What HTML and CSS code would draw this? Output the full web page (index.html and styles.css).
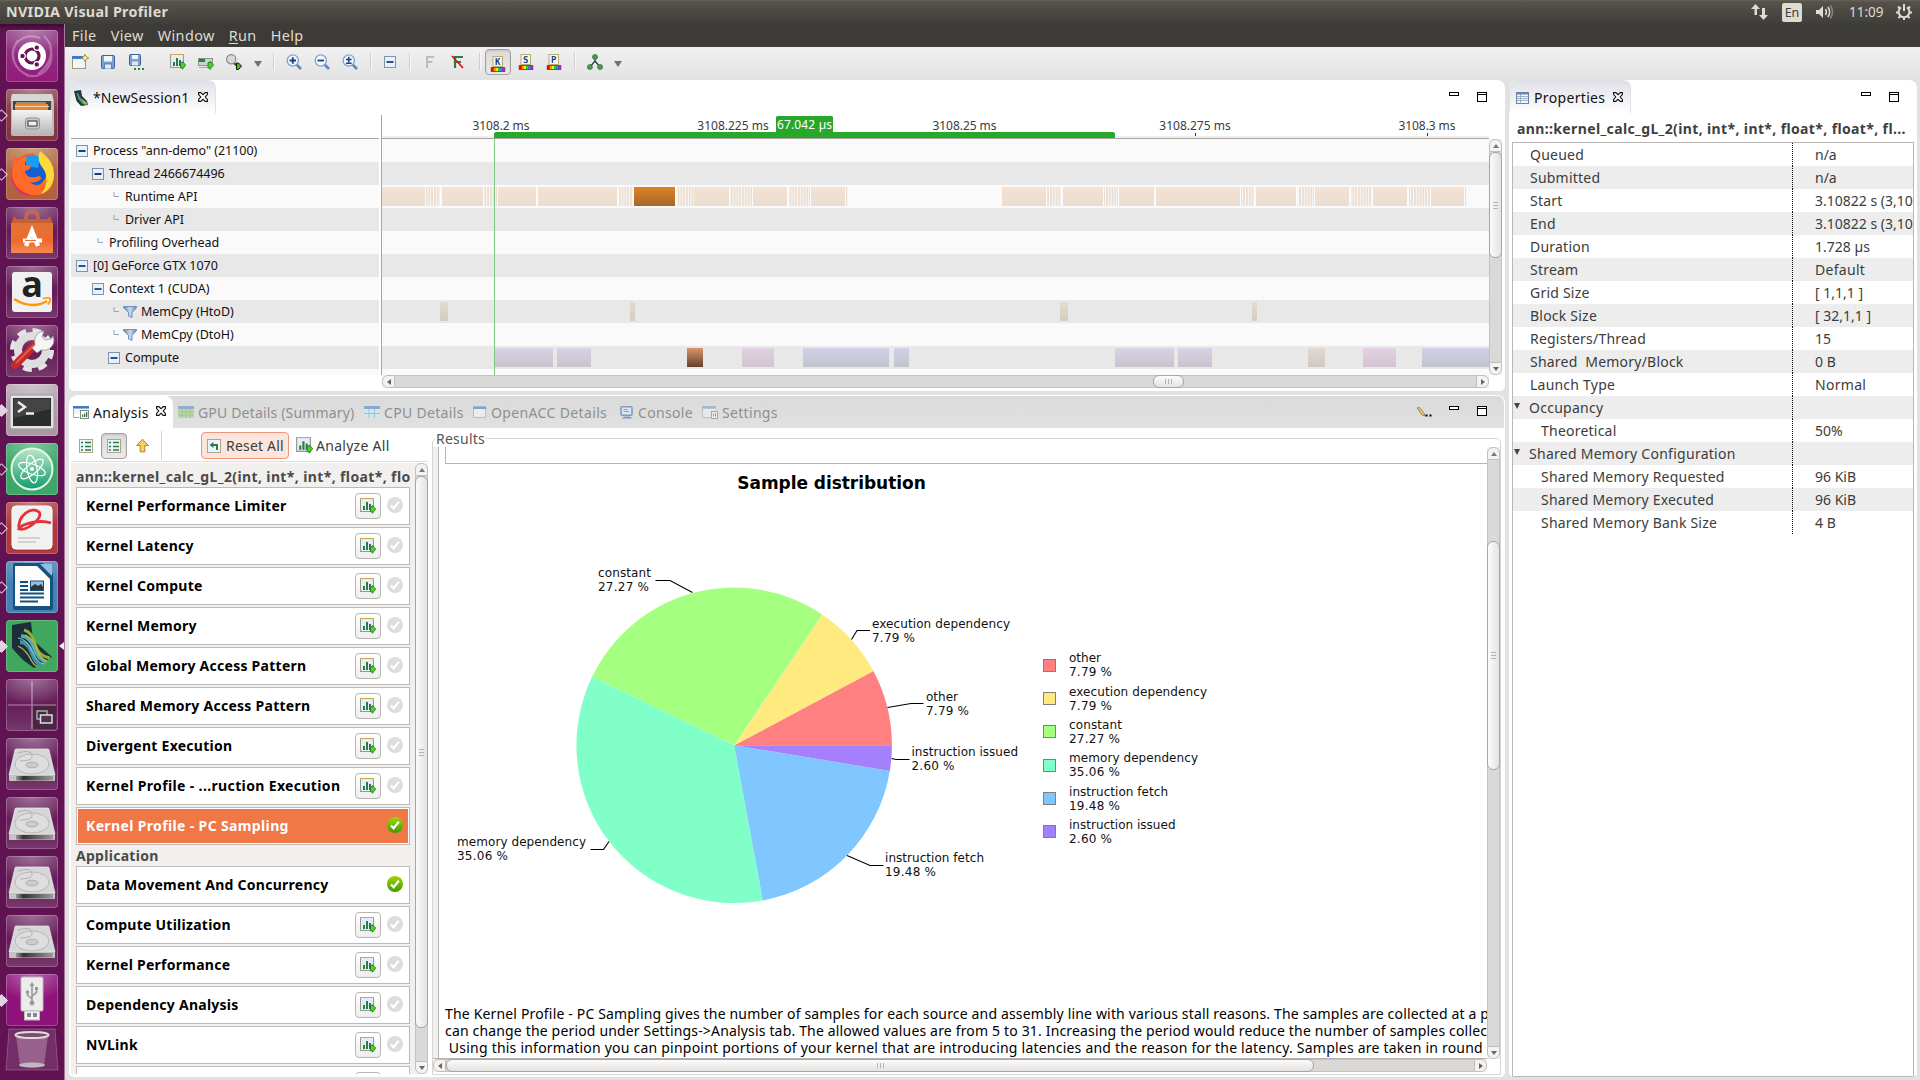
FILE: index.html
```html
<!DOCTYPE html>
<html lang="en">
<head>
<meta charset="utf-8">
<title>NVIDIA Visual Profiler</title>
<link rel="stylesheet" href="styles.css">
</head>
<body>
<svg class="defs" width="0" height="0">
  <defs>
    <linearGradient id="g-api" x1="0" y1="0" x2="0" y2="1"><stop offset="0" stop-color="#f5e2d2"/><stop offset="1" stop-color="#eaddd1"/></linearGradient>
    <linearGradient id="g-sel" x1="0" y1="0" x2="0" y2="1"><stop offset="0" stop-color="#e08224"/><stop offset="1" stop-color="#a5672e"/></linearGradient>
    <linearGradient id="g-cpy" x1="0" y1="0" x2="0" y2="1"><stop offset="0" stop-color="#e0dccb"/><stop offset="1" stop-color="#d5cdbf"/></linearGradient>
    <linearGradient id="g-vio" x1="0" y1="0" x2="0" y2="1"><stop offset="0" stop-color="#dbd1e6"/><stop offset="1" stop-color="#c8c3cd"/></linearGradient>
    <linearGradient id="g-blu" x1="0" y1="0" x2="0" y2="1"><stop offset="0" stop-color="#d0d0e8"/><stop offset="1" stop-color="#c3c3cc"/></linearGradient>
    <linearGradient id="g-pnk" x1="0" y1="0" x2="0" y2="1"><stop offset="0" stop-color="#e4d0e4"/><stop offset="1" stop-color="#d0c5ce"/></linearGradient>
    <linearGradient id="g-brn" x1="0" y1="0" x2="0" y2="1"><stop offset="0" stop-color="#d9976b"/><stop offset="1" stop-color="#63402b"/></linearGradient>
    <linearGradient id="g-tan" x1="0" y1="0" x2="0" y2="1"><stop offset="0" stop-color="#e4d8d0"/><stop offset="1" stop-color="#cfc8c3"/></linearGradient>
    <linearGradient id="g-metal" x1="0" y1="0" x2="0" y2="1"><stop offset="0" stop-color="#f4f4f4"/><stop offset="1" stop-color="#b4b4b4"/></linearGradient>
    <linearGradient id="g-steel" x1="0" y1="0" x2="1" y2="0"><stop offset="0" stop-color="#999"/><stop offset=".2" stop-color="#333"/><stop offset="1" stop-color="#999"/></linearGradient>
    <linearGradient id="g-fox" x1="1" y1="0" x2="0" y2="1"><stop offset="0" stop-color="#ffe226"/><stop offset=".35" stop-color="#ff980e"/><stop offset=".7" stop-color="#ff3647"/><stop offset="1" stop-color="#c4168c"/></linearGradient>
    <linearGradient id="g-bag" x1="0" y1="0" x2="0" y2="1"><stop offset="0" stop-color="#e0733a"/><stop offset=".6" stop-color="#ef6a2c"/><stop offset="1" stop-color="#f58a52"/></linearGradient>
    <linearGradient id="g-atom" x1="0" y1="0" x2="0" y2="1"><stop offset="0" stop-color="#b9e8c8"/><stop offset="1" stop-color="#0e9c6e"/></linearGradient>
    <linearGradient id="g-funnel" x1="0" y1="0" x2="1" y2="0"><stop offset="0" stop-color="#5f83b8"/><stop offset=".5" stop-color="#c9dbf0"/><stop offset="1" stop-color="#5f83b8"/></linearGradient>
    <linearGradient id="g-ok" x1="0" y1="0" x2="0" y2="1"><stop offset="0" stop-color="#a4d500"/><stop offset="1" stop-color="#3f9a06"/></linearGradient>
    <pattern id="p-api" width="2.8" height="19" patternUnits="userSpaceOnUse"><rect width="1.8" height="19" fill="#ebddd0"/></pattern>
    <symbol id="i-run" viewBox="0 0 16 16">
      <rect x=".5" y=".5" width="13" height="13" fill="#e4ecf8" stroke="#c4ae6a"/><path d="M.5 1v12.500h13V1" fill="none" stroke="#9a9a90"/><path d="M.5.500h13" stroke="#c9aa50"/>
      <path d="M3 8h2v4H3zM6 4h2v8H6zM9 6h2v6H9z" fill="#2e7a44"/>
      <path d="M10.500 8.500h2v-1l3.200 3.500-3.200 4.200v-1.200h-2z" fill="#55cc28" stroke="#167a16" stroke-width=".8"/>
    </symbol>
    <symbol id="i-check" viewBox="0 0 16 16"><circle cx="8" cy="8" r="8" fill="currentColor"/><path d="M4 8.500l2.600 2.800 5.200-6.500" fill="none" stroke="#fff" stroke-width="2.200"/></symbol>
    <symbol id="i-ok" viewBox="0 0 16 16"><circle cx="8" cy="8" r="8" fill="url(#g-ok)"/><path d="M4 8.500l2.600 2.800 5.200-6.500" fill="none" stroke="#fff" stroke-width="2.200"/></symbol>
    <symbol id="i-close" viewBox="0 0 10 10"><path d="M.6.6h2.200L5 2.700 7.200.6h2.200v1.900L7.200 5l2.200 2.500v1.900H7.200L5 7.300 2.800 9.400H.6V7.500L2.800 5 .6 2.500z" fill="#fff" stroke="#111" stroke-width="1.100"/></symbol>
    <symbol id="i-min" viewBox="0 0 10 10"><rect x=".5" y=".5" width="9" height="3" fill="#fff" stroke="#000"/></symbol>
    <symbol id="i-max" viewBox="0 0 10 10"><rect x=".5" y=".5" width="9" height="9" fill="#fff" stroke="#000"/><path d="M0 2.500h10" stroke="#000"/></symbol>
    <symbol id="i-fold" viewBox="0 0 12 12"><rect x=".5" y=".5" width="11" height="11" fill="#e6f2fb" stroke="#7f93ab"/><path d="M2.500 6h7" stroke="#1c3f7c" stroke-width="1.800"/></symbol>
    <symbol id="i-leaf" viewBox="0 0 6 6"><path d="M1 0v4.500h5" fill="none" stroke="#93a7bd"/></symbol>
    <symbol id="i-funnel" viewBox="0 0 14 12"><path d="M.5.500h13v1.200L9 6.500V11.500L5.500 10V6.500L.5 1.700z" fill="url(#g-funnel)" stroke="#5f7fae" stroke-width=".8"/></symbol>
    <symbol id="i-window" viewBox="0 0 16 14"><rect x=".5" y="1.500" width="14" height="11" fill="#eef6fc" stroke="#a0a58a"/><rect x="0" y="0" width="15" height="3" fill="#4a86c8"/></symbol>
    <symbol id="i-analysis" viewBox="0 0 16 13"><path d="M.5 3v8.500h6" fill="none" stroke="#a8a578"/><rect x="1" y="3" width="14" height="5" fill="#eef6fc"/><rect x="0" y="0" width="16" height="2.600" fill="#3f7cc0"/><rect x="7.500" y="4.500" width="8" height="8" fill="#fff" stroke="#888"/><path d="M9 8.500h1.300V11H9zm2-1h1.300V11H11zm2-1.500h1.300v5H13z" fill="#2e7a44"/></symbol>
    <symbol id="i-settings" viewBox="0 0 16 13"><path d="M.5 3v8.500h8" fill="none" stroke="#b5b08a"/><rect x="1" y="3" width="12" height="8" fill="#eef0f0"/><rect x="0" y="0" width="14" height="2.600" fill="#7fa3c8"/><rect x="9.500" y="5.500" width="6" height="7" fill="#f4f4ee" stroke="#8d8d80"/><path d="M11.500 7.500v3M13.500 7.500v3" stroke="#777"/></symbol>
    <symbol id="i-grid-g" viewBox="0 0 16 12"><rect width="16" height="12" fill="#a8d890"/><rect width="16" height="3" fill="#6a98c0"/><path d="M0 6h16M0 9h16M4 3v9M8 3v9M12 3v9" stroke="#7cb860"/></symbol>
    <symbol id="i-grid-b" viewBox="0 0 16 12"><rect width="16" height="12" fill="#cfeaf8"/><rect width="16" height="3" fill="#5a90c4"/><path d="M0 7.500h16M5 3v9M10.500 3v9" stroke="#7fb2d0"/></symbol>
    <symbol id="i-console" viewBox="0 0 14 13"><rect x="1" y=".8" width="11" height="8.500" rx="1" fill="#dfeaf6" stroke="#5078b0" stroke-width="1.600"/><path d="M3.500 3.500h4M3.500 5.500h5.500" stroke="#5f80a8"/><path d="M4 10.500h6l2.500 2H1.500z" fill="#5078b0"/></symbol>
    <symbol id="i-list" viewBox="0 0 14 14"><rect x=".5" y=".5" width="13" height="13" fill="#eef4fb" stroke="#aaa68a"/><path d="M6 3.500h6M6 7.500h6M6 11h6" stroke="#2e7a44" stroke-width="1.300"/><path d="M2 3.500h2M2 7.500h2M2 11h2" stroke="#2e7a44" stroke-width="1.600"/></symbol>
    <symbol id="i-glass" viewBox="0 0 16 16"><path d="M10 10l5 5" stroke="#5f86ba" stroke-width="2.600"/><circle cx="6.800" cy="6.500" r="5.600" fill="#f2f8fd" stroke="#7fa3cf" stroke-width="1.300"/></symbol>
    <symbol id="i-rainbow" viewBox="0 0 15 16"><rect x="2.500" y=".5" width="9.500" height="10" fill="#f4f8fd" stroke="#bda96a"/><rect x="0" y="11" width="15" height="5" fill="#555a78"/><path d="M1 12h2.200v3H1z" fill="#e00"/><path d="M3.200 12h2.200v3H3.200z" fill="#f90"/><path d="M5.400 12h2.200v3H5.400z" fill="#fe0"/><path d="M7.600 12h2.200v3H7.600z" fill="#2c4"/><path d="M9.800 12H12v3H9.800z" fill="#19d"/><path d="M12 12h2v3h-2z" fill="#c1c"/></symbol>
    <symbol id="i-session" viewBox="0 0 15 16"><path d="M0 1L7 0l1 6 5 5 1 4-7 1L2.500 11z" fill="#203a38"/><path d="M4 2l2 5 6 5 1 3-5-1L4 9z" fill="#3f7d60"/><path d="M7.500 9l5 3 1 3-4-1z" fill="#9ab54a"/><path d="M3 3l2 5 5 5" stroke="#86b5a8" fill="none" stroke-width=".8"/></symbol>
    <symbol id="i-disk" viewBox="0 0 52 52">
      <path d="M9 12q0-1 1-1h32q1 0 1 1l6 25H3z" fill="#d6d6d6" stroke="#eee" stroke-width=".7"/>
      <ellipse cx="26" cy="26" rx="17" ry="10" fill="#dedede" stroke="#aaa" stroke-width=".7"/>
      <ellipse cx="26" cy="27" rx="6" ry="2.800" fill="#ccc" stroke="#999" stroke-width=".7"/><path d="M12 15q12-4 14 2t-12 6" fill="none" stroke="#b2b2b2"/>
      <path d="M3 37h46v5q0 1-1 1H4q-1 0-1-1z" fill="#c4c4c4"/><rect x="10" y="38" width="37" height="4.500" fill="url(#g-steel)"/>
    </symbol>
  </defs>
</svg>

<header class="topbar">
  <h1 class="app-title">NVIDIA Visual Profiler</h1>
  <div class="tray">
    <svg width="17" height="16" viewBox="0 0 17 16" fill="#dfdbd2"><path d="M4.500 0L9 5H6v6H3.500V5H0zM12.500 16L8 11h3V4h3v7h3z"/></svg>
    <span class="lang">En</span>
    <svg width="20" height="16" viewBox="0 0 20 16" fill="none" stroke="#dfdbd2"><path d="M1 6h3l4-4v12L4 10H1z" fill="#dfdbd2" stroke="none"/><path d="M10.500 5q1.800 3 0 6" stroke-width="1.500"/><path d="M13 3q3.200 5 0 10" stroke-width="1.500"/><path d="M15.500 1.500q4 6.500 0 13" stroke-width="1.500" stroke="#8a877e"/></svg>
    <span class="clock">11:09</span>
    <svg width="16" height="16" viewBox="0 0 16 16" fill="none" stroke="#dfdbd2"><path d="M5 3.400a5.400 5.400 0 1 0 6 0" stroke-width="2"/><path d="M8 0v7" stroke-width="2"/><path d="M2 2.500l2 2M14 2.500l-2 2M0 8.500h2.500M13.500 8.500H16M2.500 14l1.700-1.700M13.500 14l-1.700-1.700M8 14v2" stroke-width="2"/></svg>
  </div>
</header>

<div class="desktop">
<nav class="launcher">
  <div class="tile t-dash"><svg viewBox="0 0 52 52"><g fill="none" stroke="#fff" stroke-opacity=".3"><path d="M8 32C2 14 18 2 34 8M20 45C36 50 50 36 44 16M38 6C50 16 46 34 32 44M12 10C2 24 8 40 22 45" stroke-width="2"/></g><circle cx="26" cy="26" r="14" fill="#fff"/><circle cx="26" cy="26" r="7" fill="none" stroke="#6b1450" stroke-width="3.200"/><g fill="#6b1450" stroke="#fff" stroke-width="1.200"><circle cx="16.500" cy="26" r="2.800"/><circle cx="30.800" cy="17.600" r="2.800"/><circle cx="30.800" cy="34.400" r="2.800"/></g></svg></div>
  <div class="tile t-files open"><svg viewBox="0 0 52 52"><path d="M6 5h40l2 8v32q0 2-2 2H7q-2 0-2-2V13z" fill="#bbb"/><path d="M6 5h40l1.500 7h-43z" fill="#d6d6d6"/><rect x="7" y="12" width="38" height="11" fill="#4a4340"/><path d="M9 15h33v7H9z" fill="#e8853c"/><path d="M10 14h30M9 17.500h34" stroke="#f5d9a8" stroke-width="1.200"/><path d="M6 21h40v25H6z" fill="url(#g-metal)"/><rect x="19.500" y="29" width="14" height="11" rx="2.500" fill="#c9c9c9" stroke="#8f8f8f"/><rect x="22" y="32" width="9" height="5" fill="#eee" stroke="#333"/></svg></div>
  <div class="tile t-firefox open"><svg viewBox="0 0 52 52"><circle cx="26" cy="27" r="21" fill="url(#g-fox)"/><path d="M10 13l-3 9 1-14 4 3q8-7 18-5l-6 2z" fill="#ff5a2c"/><ellipse cx="28" cy="23" rx="13" ry="15" fill="#1560d0"/><path d="M20 9q10-5 14 1l-2 10-12-2z" fill="#1a9cf0"/><path d="M8 10l4 3q6-3 9-1-3 3-2 5l6 1q-1 4-6 5 0 4 5 6 5 1 9-1 3 1 2 3-5 5-12 3 6 5 13 2 5-3 5-9 9 6 3 14-7 7-18 6Q8 43 6 27z" fill="#ff6a28"/><path d="M34 3c9 7 14 13 14 24 0 9-5 16-13 19 6-7 8-19 1-27-4-5-4-11-2-16z" fill="#ffd83a"/></svg></div>
  <div class="tile t-plum"><svg viewBox="0 0 52 52"><path d="M20 17V9q0-4 6-4t6 4v8" fill="none" stroke="#c9674a" stroke-width="3.500"/><path d="M8 9l-3 8h42l-3-8-3 3H11z" fill="#c95f32"/><path d="M5 16h42v30H5z" fill="url(#g-bag)"/><path d="M20 39l6-15 6 15" fill="none" stroke="#fff" stroke-width="4.500"/><path d="M17 33.500h19" stroke="#fff" stroke-width="4"/><path d="M19 33.500h11" stroke="#ee7038" stroke-width="1.200"/></svg></div>
  <div class="tile t-plum"><svg viewBox="0 0 52 52"><rect x="6" y="6" width="40" height="40" rx="3" fill="#f1f1f1"/><text x="26" y="31" class="amz" text-anchor="middle">a</text><path d="M8 33q18 11 33 2" fill="none" stroke="#f90" stroke-width="2.600"/><path d="M37 32.500q6-1.500 7 0t-2 6" fill="none" stroke="#f90" stroke-width="1.800"/></svg></div>
  <div class="tile t-plum"><svg viewBox="0 0 52 52"><circle cx="26" cy="25" r="19" fill="none" stroke="#e4e4e4" stroke-width="6" stroke-dasharray="8.500 6.420"/><circle cx="26" cy="25" r="14" fill="none" stroke="#dedede" stroke-width="8"/><path d="M9 40L30 19" stroke="#c22c28" stroke-width="8" stroke-linecap="round"/><path d="M10 38L28 20" stroke="#e05a50" stroke-width="2"/><path d="M29 20q-2-9 5-13l4-1-2 6 3 3 6-1 2-3q3 8-4 13-4 2-8 1l-4 3-5-5z" fill="#f5f5f5" stroke="#999" stroke-width=".8"/></svg></div>
  <div class="tile t-term running"><svg viewBox="0 0 52 52"><rect x="4" y="11" width="44" height="34" rx="2" fill="#e2e2e2" stroke="#999"/><rect x="7" y="14" width="38" height="28" fill="#2c2c2c"/><path d="M8 15h36v10L8 34z" fill="#444"/><path d="M12 18l7 5-7 5M20 29.500h8" fill="none" stroke="#eee" stroke-width="2.400"/></svg></div>
  <div class="tile t-atom open"><svg viewBox="0 0 52 52"><circle cx="26" cy="26" r="20.500" fill="url(#g-atom)" stroke="#e4f5ea" stroke-width="2"/><g fill="none" stroke="#fff" stroke-width="1.200"><ellipse cx="26" cy="26" rx="14" ry="5" transform="rotate(20 26 26)"/><ellipse cx="26" cy="26" rx="14" ry="5" transform="rotate(80 26 26)"/><ellipse cx="26" cy="26" rx="14" ry="5" transform="rotate(140 26 26)"/></g><circle cx="26" cy="26" r="2" fill="#fff"/></svg></div>
  <div class="tile t-pdf open"><svg viewBox="0 0 52 52"><rect x="6" y="4" width="40" height="43" rx="4" fill="#f1f1f1" stroke="#fff"/><path d="M13 28C11 13 26 4 33 10c5 6-12 19-20 17 2-5 20-10 32-6" fill="none" stroke="#e0343a" stroke-width="2.800"/><path d="M12 36h22M12 40h18" stroke="#c9c9c9" stroke-width="1.400"/></svg></div>
  <div class="tile t-writer open"><svg viewBox="0 0 52 52"><path d="M9 2h28l10 11v34q0 2-2 2H9q-2 0-2-2V4q0-2 2-2z" fill="#16527f"/><path d="M9 5h22l13 13v27H9z" fill="#fdfdfd"/><path d="M34 3h12v12z" fill="#8fc0e4"/><path d="M14 21h8M14 25h8M14 29h8M14 32.500h24M14 36.500h24M14 40.500h18" stroke="#16527f" stroke-width="2"/><rect x="24.500" y="20" width="13" height="9.500" fill="#8ec0ea" stroke="#16527f"/><path d="M25 29v-3l4-3 3 2 3-2 2 3v3z" fill="#333"/></svg></div>
  <div class="tile t-nvvp running focused"><svg viewBox="0 0 52 52"><path d="M6 5l19-3 2 18 19 17-18 11-11-8L6 28z" fill="#1c2f38"/><g fill="none"><path d="M14 22q8 0 12 11t9 12" stroke="#3d93a8" stroke-width="4"/><path d="M15 16q9 0 13 12t13 14" stroke="#55b0b4" stroke-width="3.500"/><path d="M18 10q8 2 11 14t15 14" stroke="#8fae3a" stroke-width="3"/><path d="M12 26q8 4 12 12t7 8M19 15q9 4 12 14t10 12" stroke="#c9b640" stroke-width="1.300"/><path d="M12 18q9 1 14 13t12 13" stroke="#9ad0d0" stroke-width="1"/></g></svg></div>
  <div class="tile t-plum"><svg viewBox="0 0 52 52"><rect x="27" y="27" width="23" height="23" fill="#4a2542"/><path d="M26 2v48M2 26h48" stroke="#fff" stroke-opacity=".5" stroke-width="1.200"/><rect x="31" y="32" width="10" height="8" fill="none" stroke="#aaa" stroke-width="1.500"/><rect x="34.500" y="36" width="11.500" height="8" fill="#55304e" stroke="#ddd" stroke-width="1.500"/></svg></div>
  <div class="tile t-plum"><svg viewBox="0 0 52 52"><use href="#i-disk"/></svg></div>
  <div class="tile t-plum"><svg viewBox="0 0 52 52"><use href="#i-disk"/></svg></div>
  <div class="tile t-plum"><svg viewBox="0 0 52 52"><use href="#i-disk"/></svg></div>
  <div class="tile t-plum"><svg viewBox="0 0 52 52"><use href="#i-disk"/></svg></div>
  <div class="tile t-usb running"><svg viewBox="0 0 52 52"><rect x="15" y="3" width="22" height="34" rx="1.500" fill="#ececec" stroke="#bbb"/><rect x="18.500" y="37" width="15" height="9" fill="#f3f3f3" stroke="#bbb"/><path d="M21 39h4v4h-4zM27 39h4v4h-4z" fill="#888"/><path d="M26 11v18M26 25l-4.500-4v-3M26 22l4.500-3.500V15" stroke="#999" stroke-width="1.600" fill="none"/><circle cx="26" cy="29" r="2.400" fill="#999"/><circle cx="21.500" cy="18" r="1.800" fill="#999"/><path d="M29 13h3v3h-3zM23.500 12L26 8l2.500 4z" fill="#999"/></svg></div>
  <div class="trash"><svg viewBox="0 0 54 44"><path d="M4 1h46l3 41H1z" fill="#fff" fill-opacity=".12" stroke="#fff" stroke-opacity=".22"/><path d="M11 7l4 31q12 4 24 0l4-31z" fill="#d6c3d2" fill-opacity=".35"/><ellipse cx="27" cy="7" rx="16.500" ry="3" fill="#7c4a74" stroke="#ddd" stroke-width="2"/><ellipse cx="27" cy="37" rx="13" ry="2.500" fill="#cfcfcf" fill-opacity=".8"/></svg></div>
</nav>

<main class="app">
  <nav class="menubar"><span>File</span><span>View</span><span>Window</span><span><u>R</u>un</span><span>Help</span></nav>
  <div class="toolbar">
    <svg class="tb new" viewBox="0 0 17 15"><rect x=".5" y="3.500" width="13" height="11" fill="#eef6fc" stroke="#a59a6a"/><rect x="0" y="2" width="11" height="3" fill="#3f7cc0"/><path d="M13 .3l1.200 2.500 2.500 1.200-2.500 1.200L13 7.700l-1.200-2.500L9.300 4l2.500-1.200z" fill="#fdf3b0" stroke="#a8801c" stroke-width=".9"/></svg>
    <svg class="tb save" viewBox="0 0 14 14"><rect x=".5" y=".5" width="13" height="13" rx="1" fill="#7f9fd0" stroke="#40629c"/><rect x="3" y="1" width="8" height="5.500" fill="#f2f6fb"/><rect x="3.500" y="9" width="7" height="5" fill="#dfe8f4" stroke="#40629c" stroke-width=".7"/></svg>
    <svg class="tb saveas" viewBox="0 0 16 16"><rect x="1.500" y=".5" width="11" height="11" rx="1" fill="#7f9fd0" stroke="#40629c"/><rect x="4" y="1" width="6" height="4" fill="#f2f6fb"/><rect x="4" y="7.500" width="6" height="4" fill="#dfe8f4"/><path d="M6 14h2v2H6zM10 14h2v2h-2zM14 14h2v2h-2z" fill="#2e8a2e"/></svg>
    <svg class="tb run"><use href="#i-run"/></svg>
    <svg class="tb kern" viewBox="0 0 16 13"><rect x=".5" y="1.500" width="14" height="7" fill="#c4d8cc" stroke="#8a958c"/><rect x="1" y="2" width="6" height="3" fill="#2e7a44"/><path d="M1 10.500h9" stroke="#aab"/><path d="M10 5.500h2V4l3.500 4L12 12.500V11h-2z" fill="#55cc28" stroke="#167a16" stroke-width=".8"/></svg>
    <svg class="tb lens" viewBox="0 0 16 16"><path d="M7 8l4 4" stroke="#444" stroke-width="2"/><circle cx="5.200" cy="5.200" r="4.600" fill="#d8d8d8" stroke="#8a8a8a" stroke-width="1.200"/><path d="M10.500 9h2l3 3-3 3.500h-2z" fill="#4ab81a" stroke="#111" stroke-width="1"/></svg>
    <svg class="tb drop" viewBox="0 0 8 6"><path d="M0 0h8L4 6z" fill="#707070"/></svg>
    <i class="sep"></i>
    <svg class="tb zin" viewBox="0 0 16 16"><use href="#i-glass"/><path d="M3.500 6.500h6.500M6.800 3.200v6.500" stroke="#1c3f7c" stroke-width="1.800"/></svg>
    <svg class="tb zout" viewBox="0 0 16 16"><use href="#i-glass"/><path d="M3.500 6.500h6.500" stroke="#1c3f7c" stroke-width="1.800"/></svg>
    <svg class="tb zfit" viewBox="0 0 16 16"><use href="#i-glass"/><path d="M4 5.500h5.600M6.800 2.800v5.400M4 9.300h5.600" stroke="#1c3f7c" stroke-width="1.500"/></svg>
    <i class="sep"></i>
    <svg class="tb fold"><use href="#i-fold"/></svg>
    <i class="sep"></i>
    <svg class="tb fgray" viewBox="0 0 10 12"><path d="M2 12V1h7M2 6h5.500" fill="none" stroke="#bcbcbc" stroke-width="2"/></svg>
    <svg class="tb fred" viewBox="0 0 13 14"><path d="M4 13V2h8M4 7h6" fill="none" stroke="#2e7a44" stroke-width="2.200"/><path d="M1 1l11 12" stroke="#e01010" stroke-width="1.700"/></svg>
    <i class="sep"></i>
    <span class="press"><svg viewBox="0 0 15 16"><use href="#i-rainbow"/><text x="7.300" y="9.300" class="ltr" text-anchor="middle">K</text></svg></span>
    <svg class="tb rs" viewBox="0 0 15 16"><use href="#i-rainbow"/><text x="7.300" y="9.300" class="ltr" text-anchor="middle">S</text></svg>
    <svg class="tb rp" viewBox="0 0 15 16"><use href="#i-rainbow"/><text x="7.300" y="9.300" class="ltr" text-anchor="middle">P</text></svg>
    <i class="sep"></i>
    <svg class="tb tree" viewBox="0 0 16 16"><path d="M8 3v4L3 13M8 7l5 6" fill="none" stroke="#333" stroke-width="1.200"/><g fill="#4a9a58" stroke="#2a6e38" stroke-width=".7"><circle cx="8" cy="3" r="2.500"/><circle cx="2.900" cy="13" r="2.500"/><circle cx="13.100" cy="13" r="2.500"/></g></svg>
    <svg class="tb drop" viewBox="0 0 8 6"><path d="M0 0h8L4 6z" fill="#707070"/></svg>
  </div>

  <div class="workspace">
    <div class="left">
      <section class="panel session">
        <div class="tabs">
          <div class="tab session-tab"><svg class="ic-session"><use href="#i-session"/></svg><span>*NewSession1</span><svg class="x"><use href="#i-close"/></svg></div>
          <div class="ctl"><svg><use href="#i-min"/></svg><svg><use href="#i-max"/></svg></div>
        </div>
        <div class="timeline">
          <div class="names">
            <div class="names-head"></div>
            <div class="names-list">
              <div class="nrow"><svg class="f"><use href="#i-fold"/></svg>Process "ann-demo" (21100)</div>
              <div class="nrow d1"><svg class="f"><use href="#i-fold"/></svg>Thread 2466674496</div>
              <div class="nrow l2"><svg class="lf"><use href="#i-leaf"/></svg>Runtime API</div>
              <div class="nrow l2"><svg class="lf"><use href="#i-leaf"/></svg>Driver API</div>
              <div class="nrow l1"><svg class="lf"><use href="#i-leaf"/></svg>Profiling Overhead</div>
              <div class="nrow"><svg class="f"><use href="#i-fold"/></svg>[0] GeForce GTX 1070</div>
              <div class="nrow d1"><svg class="f"><use href="#i-fold"/></svg>Context 1 (CUDA)</div>
              <div class="nrow l2"><svg class="lf"><use href="#i-leaf"/></svg><svg class="fn"><use href="#i-funnel"/></svg>MemCpy (HtoD)</div>
              <div class="nrow l2"><svg class="lf"><use href="#i-leaf"/></svg><svg class="fn"><use href="#i-funnel"/></svg>MemCpy (DtoH)</div>
              <div class="nrow d2"><svg class="f"><use href="#i-fold"/></svg>Compute</div>
              <div class="nrow"></div>
            </div>
          </div>
          <div class="tracks">
            <svg class="track-svg" viewBox="382 113 1107 262">
              <rect x="382" y="136" width="1107" height="2" fill="#f1efed"/>
              <path d="M382 138.500h1107" stroke="#a9a49f"/>
              <path d="M494 138v-4q0-2 2-2h617q2 0 2 2v4z" fill="#27a82b"/>
              <rect x="776" y="116" width="57" height="17" rx="1.500" fill="#27a82b"/>
              <path d="M1195.500 133v3M1427.500 133v3" stroke="#333"/>
              <g class="tick" text-anchor="middle">
                <text x="501" y="130" textLength="57">3108.2 ms</text><text x="733" y="130" textLength="71.500">3108.225 ms</text>
                <text x="964.500" y="130" textLength="64">3108.25 ms</text><text x="1195" y="130" textLength="71.500">3108.275 ms</text><text x="1427" y="130" textLength="57">3108.3 ms</text>
                <text x="804.500" y="129.300" textLength="55" class="mark">67.042 µs</text>
              </g>
              <g fill="url(#g-api)">
                <rect x="382" y="187" width="43" height="19"/><rect x="442" y="187" width="41" height="19"/><rect x="498" y="187" width="38" height="19"/><rect x="538" y="187" width="79" height="19"/><rect x="694" y="187" width="35" height="19"/><rect x="753" y="187" width="34" height="19"/><rect x="811" y="187" width="34" height="19"/>
                <rect x="1002" y="187" width="44" height="19"/><rect x="1063" y="187" width="40" height="19"/><rect x="1119" y="187" width="35" height="19"/><rect x="1156" y="187" width="84" height="19"/><rect x="1256" y="187" width="40" height="19"/><rect x="1315" y="187" width="34" height="19"/><rect x="1373" y="187" width="34" height="19"/><rect x="1431" y="187" width="33" height="19"/>
              </g>
              <g fill="url(#p-api)">
                <rect x="426" y="187" width="14" height="19"/><rect x="484" y="187" width="13" height="19"/><rect x="619" y="187" width="14" height="19"/><rect x="677" y="187" width="17" height="19"/><rect x="730" y="187" width="22" height="19"/><rect x="789" y="187" width="21" height="19"/><rect x="846" y="187" width="1.500" height="19"/>
                <rect x="1047" y="187" width="14" height="19"/><rect x="1104" y="187" width="14" height="19"/><rect x="1241" y="187" width="13" height="19"/><rect x="1298" y="187" width="16" height="19"/><rect x="1351" y="187" width="21" height="19"/><rect x="1409" y="187" width="21" height="19"/><rect x="1465" y="187" width="1.500" height="19"/>
              </g>
              <rect x="634" y="187" width="41" height="19" fill="url(#g-sel)"/>
              <g fill="url(#g-cpy)"><rect x="440" y="302" width="8" height="19"/><rect x="630" y="302" width="5" height="19"/><rect x="1060" y="302" width="8" height="19"/><rect x="1252" y="302" width="5" height="19"/></g>
              <g fill="url(#g-vio)"><rect x="495" y="348" width="58" height="19"/><rect x="557" y="348" width="34" height="19"/><rect x="1115" y="348" width="59" height="19"/><rect x="1178" y="348" width="34" height="19"/></g>
              <g fill="url(#g-pnk)"><rect x="742" y="348" width="32" height="19"/><rect x="1363" y="348" width="33" height="19"/></g>
              <g fill="url(#g-blu)"><rect x="803" y="348" width="86" height="19"/><rect x="894" y="348" width="15" height="19"/><rect x="1422" y="348" width="67" height="19"/></g>
              <rect x="687" y="348" width="16" height="19" fill="url(#g-brn)"/><rect x="1308" y="348" width="17" height="19" fill="url(#g-tan)"/>
              <path d="M494.500 139v236" stroke="#7cc980"/>
            </svg>
            <div class="hs"><i class="b l"></i><div class="tr"><i class="th th-time"></i></div><i class="b r"></i></div>
          </div>
          <div class="vs vs-time"><i class="b u"></i><div class="tr"><i class="th"></i></div><i class="b d"></i></div>
        </div>
      </section>

      <section class="panel analysis">
        <div class="tabbar">
          <div class="tab2 on"><svg class="w16"><use href="#i-analysis"/></svg><span>Analysis</span><svg class="x"><use href="#i-close"/></svg></div>
          <div class="tab2 t-gpu"><svg class="w16"><use href="#i-grid-g"/></svg><span>GPU Details (Summary)</span></div>
          <div class="tab2 t-cpu"><svg class="w16"><use href="#i-grid-b"/></svg><span>CPU Details</span></div>
          <div class="tab2 t-acc"><svg class="w14"><use href="#i-window"/></svg><span>OpenACC Details</span></div>
          <div class="tab2 t-con"><svg class="w14"><use href="#i-console"/></svg><span>Console</span></div>
          <div class="tab2 t-set"><svg class="w16"><use href="#i-settings"/></svg><span>Settings</span></div>
          <div class="ctl"><svg class="pen" viewBox="0 0 15 10"><path d="M0 1l2-1 5 6 1 3-3-1z" fill="#e8c070" stroke="#8a6a2c" stroke-width=".7"/><path d="M8.500 7.500h2v2h-2zM12.500 7.500h2v2h-2z"/></svg><svg><use href="#i-min"/></svg><svg><use href="#i-max"/></svg></div>
        </div>
        <div class="body">
          <div class="guide">
            <div class="gbar">
              <svg class="gi"><use href="#i-list"/></svg>
              <span class="press gp"><svg class="gi"><use href="#i-list"/></svg></span>
              <svg class="up" viewBox="0 0 14 15"><path d="M7 .7L13.300 7.500H9.500v6.800h-5V7.500H.7z" fill="#f8cf60" stroke="#b07a14"/></svg>
              <i class="gsep"></i>
              <span class="reset"><svg width="14" height="14" viewBox="0 0 14 14"><rect x=".5" y=".5" width="13" height="13" fill="#eef4fb" stroke="#aaa68a"/><path d="M10 11V6H5" fill="none" stroke="#2e7a44" stroke-width="2"/><path d="M2.500 6L6.500 3v6z" fill="#2e7a44"/></svg>Reset All</span>
              <span class="all"><svg width="17" height="17"><use href="#i-run"/></svg>Analyze All</span>
            </div>
            <div class="glist">
              <div class="items">
                <div class="ghead">ann::kernel_calc_gL_2(int, int*, int*, float*, flo</div>
                <div class="item"><b>Kernel Performance Limiter</b><span class="rb"><svg><use href="#i-run"/></svg></span><svg class="ck"><use href="#i-check"/></svg></div>
                <div class="item"><b>Kernel Latency</b><span class="rb"><svg><use href="#i-run"/></svg></span><svg class="ck"><use href="#i-check"/></svg></div>
                <div class="item"><b>Kernel Compute</b><span class="rb"><svg><use href="#i-run"/></svg></span><svg class="ck"><use href="#i-check"/></svg></div>
                <div class="item"><b>Kernel Memory</b><span class="rb"><svg><use href="#i-run"/></svg></span><svg class="ck"><use href="#i-check"/></svg></div>
                <div class="item"><b>Global Memory Access Pattern</b><span class="rb"><svg><use href="#i-run"/></svg></span><svg class="ck"><use href="#i-check"/></svg></div>
                <div class="item"><b>Shared Memory Access Pattern</b><span class="rb"><svg><use href="#i-run"/></svg></span><svg class="ck"><use href="#i-check"/></svg></div>
                <div class="item"><b>Divergent Execution</b><span class="rb"><svg><use href="#i-run"/></svg></span><svg class="ck"><use href="#i-check"/></svg></div>
                <div class="item wide"><b>Kernel Profile - ...ruction Execution</b><span class="rb"><svg><use href="#i-run"/></svg></span><svg class="ck"><use href="#i-check"/></svg></div>
                <div class="item sel wide"><b>Kernel Profile - PC Sampling</b><svg class="ck"><use href="#i-ok"/></svg></div>
                <div class="ghead app-head">Application</div>
                <div class="item"><b>Data Movement And Concurrency</b><svg class="ck"><use href="#i-ok"/></svg></div>
                <div class="item"><b>Compute Utilization</b><span class="rb"><svg><use href="#i-run"/></svg></span><svg class="ck"><use href="#i-check"/></svg></div>
                <div class="item"><b>Kernel Performance</b><span class="rb"><svg><use href="#i-run"/></svg></span><svg class="ck"><use href="#i-check"/></svg></div>
                <div class="item"><b>Dependency Analysis</b><span class="rb"><svg><use href="#i-run"/></svg></span><svg class="ck"><use href="#i-check"/></svg></div>
                <div class="item"><b>NVLink</b><span class="rb"><svg><use href="#i-run"/></svg></span><svg class="ck"><use href="#i-check"/></svg></div>
                <div class="item"><b></b><span class="rb"></span><svg class="ck"></svg></div>
              </div>
              <div class="vs vs-guide"><i class="b u"></i><div class="tr"><i class="th"></i></div><i class="b d"></i></div>
            </div>
          </div>

          <fieldset class="results">
            <legend>Results</legend>
            <div class="rgrid">
              <div class="rview">
                <div class="prev"></div>
                <svg class="chart" viewBox="440 464 1047 536">
                  <text class="ct" x="831.500" y="488.500" text-anchor="middle" textLength="188.500">Sample distribution</text>
                  <g transform="translate(734.200 745.300)">
                    <path d="M0 0H157.700A157.700 157.700 0 0 0 139.200-74.200z" fill="#ff8080"/>
                    <path d="M0 0L139.200-74.200A157.700 157.700 0 0 0 88-130.900z" fill="#ffea80"/>
                    <path d="M0 0L88-130.900A157.700 157.700 0 0 0-142.100-68.500z" fill="#a5ff80"/>
                    <path d="M0 0L-142.100-68.500A157.700 157.700 0 0 0 28.700 155.100z" fill="#80ffc9"/>
                    <path d="M0 0L28.700 155.100A157.700 157.700 0 0 0 155.600 25.600z" fill="#80c6ff"/>
                    <path d="M0 0L155.600 25.600A157.700 157.700 0 0 0 157.700 0z" fill="#a480ff"/>
                  </g>
                  <g fill="none" stroke="#000" stroke-width="1.100"><path d="M655.500 580.500H670L692.500 592.500M851.500 639.500L857 630.500H870M887.500 707.500L911 703.500H923.500M891.500 758.500L896 759.500H909.500M847 855.500L870 865.500H883.500M590.500 849.500H603.500L609 841.500"/></g>
                  <g class="cl">
                    <text x="598" y="577" textLength="53">constant</text><text x="598" y="591" textLength="51">27.27 %</text>
                    <text x="872" y="628" textLength="138">execution dependency</text><text x="872" y="642" textLength="43">7.79 %</text>
                    <text x="926" y="701" textLength="32">other</text><text x="926" y="715" textLength="43">7.79 %</text>
                    <text x="911.500" y="756" textLength="106.500">instruction issued</text><text x="911.500" y="770" textLength="43">2.60 %</text>
                    <text x="885" y="862" textLength="99">instruction fetch</text><text x="885" y="876" textLength="51">19.48 %</text>
                    <text x="457" y="846" textLength="129">memory dependency</text><text x="457" y="860" textLength="51">35.06 %</text>
                    <text x="1069" y="662" textLength="32">other</text><text x="1069" y="676" textLength="43">7.79 %</text>
                    <text x="1069" y="696" textLength="138">execution dependency</text><text x="1069" y="710" textLength="43">7.79 %</text>
                    <text x="1069" y="729" textLength="53">constant</text><text x="1069" y="743" textLength="51">27.27 %</text>
                    <text x="1069" y="762" textLength="129">memory dependency</text><text x="1069" y="776" textLength="51">35.06 %</text>
                    <text x="1069" y="796" textLength="99">instruction fetch</text><text x="1069" y="810" textLength="51">19.48 %</text>
                    <text x="1069" y="829" textLength="106.500">instruction issued</text><text x="1069" y="843" textLength="43">2.60 %</text>
                  </g>
                  <g stroke="#808080"><rect x="1043.500" y="659.500" width="12" height="12" fill="#ff8080"/><rect x="1043.500" y="692.500" width="12" height="12" fill="#ffea80"/><rect x="1043.500" y="725.500" width="12" height="12" fill="#a5ff80"/><rect x="1043.500" y="759.500" width="12" height="12" fill="#80ffc9"/><rect x="1043.500" y="792.500" width="12" height="12" fill="#80c6ff"/><rect x="1043.500" y="825.500" width="12" height="12" fill="#a480ff"/></g>
                </svg>
                <div class="desc">
                  <p class="tight">The Kernel Profile - PC Sampling gives the number of samples for each source and assembly line with various stall reasons. The samples are collected at a period</p>
                  <p class="tight">can change the period under Settings-&gt;Analysis tab. The allowed values are from 5 to 31. Increasing the period would reduce the number of samples collected</p>
                  <p>&nbsp;Using this information you can pinpoint portions of your kernel that are introducing latencies and the reason for the latency. Samples are taken in round</p>
                  <p>warps at a fixed number of cycles regardless of whether the</p>
                </div>
              </div>
              <div class="vs vs-res"><i class="b u"></i><div class="tr"><i class="th"></i></div><i class="b d"></i></div>
              <div class="hs hs-res"><i class="b l"></i><div class="tr"><i class="th th-res"></i></div><i class="b r"></i></div>
            </div>
          </fieldset>
        </div>
      </section>
    </div>

    <section class="panel props">
      <div class="tabs">
        <div class="tab props-tab"><svg class="ic-props" viewBox="0 0 13 12"><rect x=".5" y=".5" width="12" height="11" fill="#f4f7fb" stroke="#6c83a8"/><rect width="13" height="2.500" fill="#6c83a8"/><path d="M1 4.500h11M1 6.500h11M1 8.500h11M4.500 2v10" stroke="#93a8c4" stroke-width=".9"/></svg><span>Properties</span><svg class="x"><use href="#i-close"/></svg></div>
        <div class="ctl"><svg><use href="#i-min"/></svg><svg><use href="#i-max"/></svg></div>
      </div>
      <h2 class="pname">ann::kernel_calc_gL_2(int, int*, int*, float*, float*, fl...</h2>
      <div class="ptable">
        <div class="pr"><span>Queued</span><span>n/a</span></div>
        <div class="pr"><span>Submitted</span><span>n/a</span></div>
        <div class="pr"><span>Start</span><span>3.10822 s (3,108</span></div>
        <div class="pr"><span>End</span><span>3.10822 s (3,108</span></div>
        <div class="pr"><span>Duration</span><span>1.728 µs</span></div>
        <div class="pr"><span>Stream</span><span class="word">Default</span></div>
        <div class="pr"><span>Grid Size</span><span>[ 1,1,1 ]</span></div>
        <div class="pr"><span>Block Size</span><span>[ 32,1,1 ]</span></div>
        <div class="pr"><span>Registers/Thread</span><span>15</span></div>
        <div class="pr"><span>Shared&nbsp; Memory/Block</span><span>0 B</span></div>
        <div class="pr"><span>Launch Type</span><span class="word">Normal</span></div>
        <div class="pr grp"><span>Occupancy</span><span></span></div>
        <div class="pr kid"><span>Theoretical</span><span>50%</span></div>
        <div class="pr grp"><span>Shared Memory Configuration</span><span></span></div>
        <div class="pr kid"><span>Shared Memory Requested</span><span>96 KiB</span></div>
        <div class="pr kid"><span>Shared Memory Executed</span><span>96 KiB</span></div>
        <div class="pr kid"><span>Shared Memory Bank Size</span><span>4 B</span></div>
      </div>
    </section>
  </div>
</main>
</div>
</body>
</html>
```
FILE: styles.css
```css
* { box-sizing: border-box; }
html, body { margin: 0; height: 1080px; overflow: hidden; }
body { display: flex; flex-direction: column; font-family: "Noto Sans", "Open Sans", sans-serif; font-size: 14px; letter-spacing: .28px; color: #3c3c3c; background: #e2e2e2; }
.defs { position: absolute; }
svg { flex: none; display: block; }
h1, h2, p { margin: 0; }

/* top bar */
.topbar { height: 24px; flex: none; display: flex; align-items: center; justify-content: space-between; padding: 0 8px 0 6px; background: linear-gradient(#67645a, #55524a 2px, #3f3e39); color: #dfdbd2; }
.app-title { font-size: 14.300px; font-weight: 700; letter-spacing: .3px; line-height: 22px; }
.tray { display: flex; align-items: center; }
.lang { width: 20px; height: 19px; margin: 0 13px 0 14px; border-radius: 2px; background: #dfdbd2; color: #3c3b37; font-size: 12.500px; line-height: 19px; text-align: center; letter-spacing: 0; }
.clock { margin: 0 12px 0 14px; font-size: 13.500px; line-height: 22px; letter-spacing: 0; width: 35px; white-space: nowrap; }

/* launcher */
.desktop { display: flex; flex: 1; min-height: 0; }
.launcher { width: 65px; flex: none; padding: 6px 6px 0 6px; display: flex; flex-direction: column; gap: 7px; background: linear-gradient(#3c0a33, #611253 6px); border-right: 1px solid #a778a0; }
.tile { position: relative; height: 52px; flex: none; border-radius: 4px; box-shadow: inset 0 0 0 1px rgba(255,255,255,.22); }
.tile::before { content: ""; position: absolute; inset: 0; border-radius: 4px; background: radial-gradient(ellipse 80% 50% at 50% 0, rgba(255,255,255,.35), rgba(255,255,255,0)); }
.tile svg { position: relative; width: 52px; height: 52px; }
.t-dash { background: linear-gradient(#8d3a83, #951a7c); }
.t-files { background: linear-gradient(#8b4450, #84333f); }
.t-firefox { background: linear-gradient(#b26f45, #b0603e); }
.t-plum { background: linear-gradient(#6a2660, #661c59 50%, #77386c); }
.t-term { background: linear-gradient(#b5a6b2, #a897a5); }
.t-atom { background: #3ba868; }
.t-pdf { background: #ae3a3e; }
.t-writer { background: #4580b4; }
.t-nvvp { background: #3fa75e; }
.t-usb { background: #8e1279; }
.amz { font: 700 36px "Open Sans", sans-serif; fill: #222; letter-spacing: 0; }
.open::after, .running::after { content: ""; position: absolute; left: -9px; top: 22px; width: 7px; height: 7px; border: 1px solid #e3d3e0; transform: rotate(45deg); }
.running::after { background: #e3d3e0; }
.focused::before { background: none; content: ""; inset: auto; left: 53px; top: 22px; border-radius: 0; border: solid transparent; border-width: 4px 5px 4px 0; border-right-color: #eee; }
.trash { width: 54px; height: 44px; margin: -5px 0 0 -1px; }
.trash svg { width: 54px; height: 44px; }

/* menus and toolbar */
.app { flex: 1; min-width: 0; display: flex; flex-direction: column; }
.menubar { height: 23px; flex: none; display: flex; gap: 14px; padding-left: 7px; background: #3c3b37; color: #dfdbd2; line-height: 24px; font-size: 14.400px; letter-spacing: .4px; }
.menubar u { text-underline-offset: 2px; }
.toolbar { height: 33px; flex: none; display: flex; align-items: flex-start; padding: 6px 0 0 7px; background: linear-gradient(#f1f1f1, #e2e2e2); }
.tb { width: 16px; height: 16px; margin: 1px 12px 0 0; }
.tb.new { width: 17px; height: 15px; margin-right: 12px; }
.tb.save { width: 14px; height: 14px; margin: 2px 13px 0 0; }
.tb.saveas { margin-right: 26px; }
.tb.kern { height: 13px; margin-top: 4px; }
.tb.drop { width: 8px; height: 6px; margin: 8px 11px 0 0; }
.tb.lens { margin-right: 12px; }
.sep { width: 1px; height: 17px; margin-right: 12px; background: #cfcfcf; box-shadow: 1px 0 #f8f8f8; }
.tb.fold { width: 12px; height: 12px; margin: 3px 13px 0 1px; }
.tb.fgray { width: 10px; height: 12px; margin: 3px 16px 0 3px; }
.tb.fred { width: 13px; height: 14px; margin: 2px 15px 0 0; }
.press { width: 26px; height: 26px; display: flex; align-items: center; justify-content: center; border: 1px solid #a5a29e; border-radius: 4px; background: linear-gradient(#dcdbd9, #ebeae8); box-shadow: inset 0 1px 2px rgba(0,0,0,.12); }
.toolbar .press { margin: -4px 7px 0 -7px; padding-top: 3px; }
.toolbar .press svg, .tb.rs, .tb.rp { width: 16px; height: 16px; }
.tb.tree { margin-right: 11px; }
.ltr { font: 700 9px "DejaVu Sans Mono", monospace; fill: #1c3f7c; letter-spacing: 0; }

/* panels */
.workspace { flex: 1; min-height: 0; display: flex; gap: 4px; padding: 0 3px 3px 4px; background: #e2e2e2; }
.left { width: 1436px; flex: none; display: flex; flex-direction: column; gap: 4px; }
.panel { background: #fff; border-radius: 8px 8px 5px 5px; overflow: hidden; }
.session { height: 311px; flex: none; }
.tabs { height: 33px; display: flex; justify-content: space-between; }
.tab { display: flex; align-items: center; height: 33px; border-radius: 8px 8px 0 0; background: linear-gradient(#e0e0e8, #fff); border: 1px solid #e0e0e8; border-width: 1px 1px 0; color: #111; }
.session-tab { width: 147px; padding: 1px 0 0 4px; }
.ic-session { width: 15px; height: 16px; margin-right: 4px; }
.tab span { flex: none; letter-spacing: .15px; }
.x { width: 10px; height: 10px; margin: 0 0 2px 8px; }
.ctl { display: flex; align-items: flex-start; gap: 18px; padding: 12px 18px 0 0; }
.ctl svg { width: 10px; height: 10px; }

/* timeline */
.timeline { display: flex; height: 274px; padding-left: 2px; }
.names { width: 308px; flex: none; }
.names-head { height: 26px; border-bottom: 1px solid #a9a49f; }
.names-list { height: 236px; overflow: hidden; font-size: 12.500px; letter-spacing: -.02px; color: #111; background: repeating-linear-gradient(#fafafa 0 23px, #e8e8e8 23px 46px); }
.nrow { height: 23px; display: flex; align-items: center; padding-left: 5px; white-space: nowrap; }
.d1 { padding-left: 21px; }
.d2 { padding-left: 37px; }
.l1 { padding-left: 26px; }
.l2 { padding-left: 42px; }
.f { width: 12px; height: 12px; margin-right: 5px; }
.lf { width: 6px; height: 6px; margin: 0 6px 3px 0; }
.fn { width: 14px; height: 12px; margin: 0 4px 0 -2px; }
.tracks { width: 1110px; flex: none; padding-left: 3px; background: linear-gradient(#a9a49f, #a9a49f) 2px 2px / 1px 260px no-repeat; }
.track-svg { width: 1107px; height: 262px; background: repeating-linear-gradient(#fafafa 0 23px, #e8e8e8 23px 46px) 0 26px no-repeat; }
.tick text { font-size: 12px; letter-spacing: 0; fill: #3c3c3c; }
.tick .mark { fill: #fff; }

/* scrollbars */
.hs, .vs { display: flex; }
.vs { width: 13px; flex-direction: column; background: #f1f0ee; }
.hs { height: 13px; background: #f1f0ee; }
.tr { flex: 1; min-width: 0; min-height: 0; border: 1px solid #c4c2bf; border-width: 0 1px; background: #dad9d7; }
.hs .tr { border-width: 1px 0; }
.th { display: flex; align-items: center; justify-content: center; border: 1px solid #a8a5a2; border-radius: 6px; background: linear-gradient(90deg, #fbfbfb, #e4e3e1); }
.hs .th { height: 13px; margin-top: -1px; background: linear-gradient(#fbfbfb, #e4e3e1); }
.vs .th { width: 13px; margin-left: -1px; }
.vs .th::after { content: ""; width: 5px; height: 7px; background: repeating-linear-gradient(#b5b3b0 0 1px, transparent 1px 3px); }
.hs .th::after { content: ""; width: 7px; height: 5px; background: repeating-linear-gradient(90deg, #b5b3b0 0 1px, transparent 1px 3px); }
.b { width: 13px; height: 13px; flex: none; display: flex; align-items: center; justify-content: center; border: 1px solid #c0bebb; background: #f4f3f1; }
.b::after { content: ""; border: 3px solid transparent; }
.u { border-radius: 6px 6px 0 0; } .u::after { border-bottom: 4px solid #777; margin-top: -3px; }
.d { border-radius: 0 0 6px 6px; } .d::after { border-top: 4px solid #666; margin-bottom: -3px; }
.l { border-radius: 6px 0 0 6px; } .l::after { border-right: 4px solid #666; margin-left: -3px; }
.r { border-radius: 0 6px 6px 0; } .r::after { border-left: 4px solid #666; margin-right: -3px; }
.th-time { width: 31px; margin-left: 758px; }
.vs-time { height: 236px; margin-top: 26px; }
.vs-time .th { height: 106px; }

/* analysis panel */
.analysis { flex: 1; min-height: 0; display: flex; flex-direction: column; border: 1px solid #fff; border-left: 0; }
.tabbar { height: 32px; flex: none; display: flex; background: linear-gradient(#dadada, #e1e1e1); color: #8f8f8f; }
.tab2 { display: flex; align-items: center; flex: none; letter-spacing: .32px; white-space: nowrap; }
.tab2 svg { opacity: .65; }
.tab2.on { width: 104px; margin-right: 5px; padding-left: 4px; background: #fff; color: #111; border-radius: 8px 8px 0 0; }
.tab2.on svg { opacity: 1; }
.tab2.on .x { margin-left: 7px; }
.w16 { width: 16px; height: 13px; margin-right: 4px; }
.w14 { width: 14px; height: 13px; margin-right: 4px; }
.t-gpu { width: 186px; letter-spacing: .17px; }
.t-gpu svg { height: 12px; }
.t-cpu { width: 109px; }
.t-cpu svg { height: 12px; }
.t-acc { width: 147px; letter-spacing: .36px; }
.t-con { width: 82px; }
.tabbar .ctl { margin-left: auto; padding-top: 10px; padding-right: 17px; }
.tabbar .ctl .pen { width: 15px; height: 10px; margin: 1px -1px 0 0; }
.body { flex: 1; min-height: 0; display: flex; padding-left: 2px; }
.guide { width: 357px; flex: none; display: flex; flex-direction: column; }
.gbar { height: 34px; flex: none; display: flex; align-items: center; padding: 2px 0 0 8px; border-bottom: 1px solid #dcdcdc; }
.gi { width: 14px; height: 14px; }
.gbar .gp { margin: 0 9px 0 8px; }
.up { width: 13px; height: 15px; }
.gsep { width: 1px; height: 29px; margin: 0 39px 0 12px; background: #d5d5d5; }
.reset { width: 88px; height: 27px; display: flex; align-items: center; gap: 5px; padding-left: 5px; border: 1px solid #f0957a; border-radius: 4px; background: #fde5dc; white-space: nowrap; letter-spacing: .2px; }
.all { display: flex; align-items: center; gap: 3px; margin-left: 7px; white-space: nowrap; }
.glist { display: flex; height: 611px; margin-top: 1px; background: #f1f0ee; overflow: hidden; }
.items { width: 344px; flex: none; padding: 0 5px; }
.ghead { height: 24px; font-weight: 700; line-height: 28px; letter-spacing: .38px; white-space: nowrap; overflow: hidden; color: #4a4a4a; }
.app-head { height: 19px; line-height: 18px; letter-spacing: .28px; }
.item { height: 38px; margin-bottom: 2px; padding: 0 6px 0 9px; display: flex; align-items: center; background: #fff; border: 1px solid #bdbab6; color: #000; white-space: nowrap; }
.item b { flex: 1; padding-bottom: 2px; letter-spacing: .26px; }
.item.wide b { letter-spacing: .36px; }
.rb { width: 26px; height: 26px; margin-right: 6px; display: flex; align-items: center; justify-content: center; border: 1px solid #b9b6b2; border-radius: 4px; background: linear-gradient(#fff, #eee); }
.rb svg { width: 16px; height: 16px; }
.ck { width: 16px; height: 16px; margin-bottom: 2px; color: #dcdedb; }
.item.sel { background: #f07746; box-shadow: inset 0 0 0 1px #fff; color: #fff; }
.vs-guide .th { height: 552px; }

/* results */
.results { flex: none; width: 1069px; height: 646px; margin: 1px 0 0 4px; padding: 0; border: 1px solid #d5d5d5; border-radius: 5px 5px 0 0; min-width: 0; }
.results legend { height: 19px; line-height: 19px; margin-left: 3px; padding: 0; letter-spacing: .24px; color: #555; }
.rgrid { display: grid; grid-template-columns: 1054px 13px; grid-template-rows: 612px 13px; margin-top: -1px; }
.rview { height: 612px; overflow: hidden; background: linear-gradient(90deg, #f1f0ee 5px, #b5b2af 5px 6px, #fff 6px); padding-left: 7px; border-bottom: 1px solid #b5b2af; }
.prev { height: 17px; margin-left: 5px; border: 1px solid #b5b5b5; border-width: 0 0 1px 1px; }
.chart { width: 1047px; height: 536px; }
.ct { font: 700 17px "DejaVu Sans", sans-serif; letter-spacing: 0; }
.cl text { font: 12px "DejaVu Sans", sans-serif; letter-spacing: 0; fill: #111; }
.desc { padding: 5px 0 0 5px; color: #000; letter-spacing: .22px; white-space: nowrap; }
.desc p { height: 17px; line-height: 17px; }
.desc .tight { letter-spacing: .165px; }
.vs-res .th { height: 229px; margin-top: 81px; }
.th-res { width: 868px; }

/* properties */
.props { flex: 1; min-width: 0; padding: 0 3px; }
.props-tab { width: 122px; margin-left: -3px; padding: 1px 0 0 6px; }
.ic-props { width: 13px; height: 12px; margin-right: 5px; }
.props-tab span { letter-spacing: .34px; }
.props .ctl { padding-right: 15px; }
.pname { height: 29px; padding: 0 0 0 5px; font-size: 14px; line-height: 31px; letter-spacing: .37px; white-space: nowrap; color: #3f3f3f; }
.ptable { height: 935px; border: 1px solid #b9b6b3; }
.pr { height: 23px; display: grid; grid-template-columns: 280px 1fr; line-height: 23px; letter-spacing: .22px; white-space: nowrap; overflow: hidden; }
.pr:nth-child(even) { background: #ededed; }
.pr span:first-child { padding-left: 17px; border-right: 1px dotted #111; }
.pr span:last-child { padding-left: 22px; letter-spacing: 0; }
.pr .word:last-child { letter-spacing: .3px; }
.pr.kid span:first-child { padding-left: 28px; }
.grp span:first-child { display: flex; padding-left: 1px; letter-spacing: .27px; }
.grp span:first-child::before { content: ""; width: 0; height: 0; margin: 7px 9px 0 0; border: 3.500px solid transparent; border-top: 6px solid #444; border-bottom: 0; }
.pr.grp span:first-child { padding-left: 1px; }
```
